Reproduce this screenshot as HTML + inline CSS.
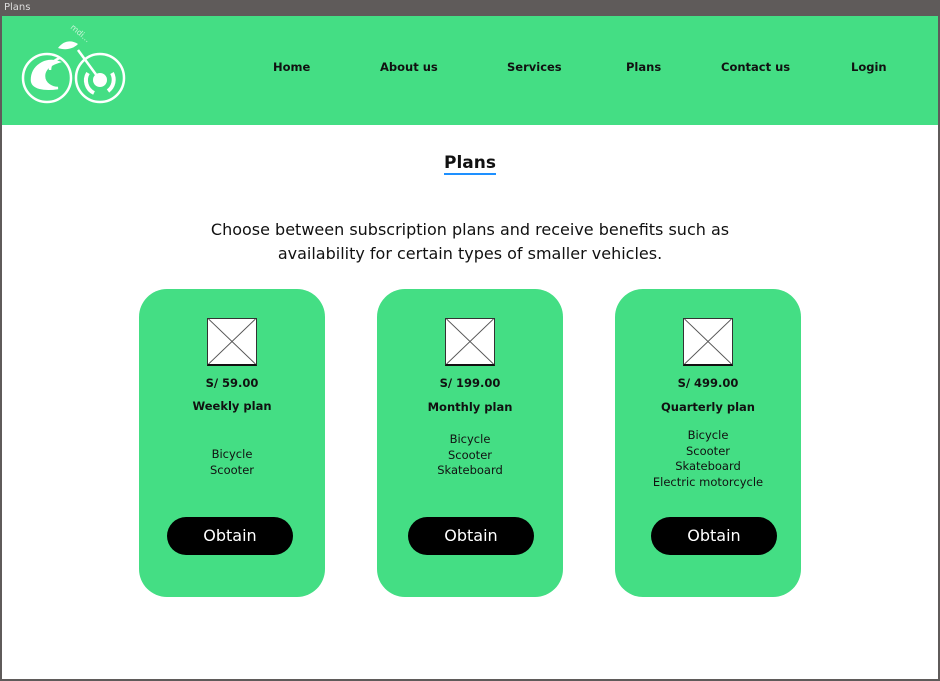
<!DOCTYPE html>
<html><head><meta charset="utf-8"><style>
*{margin:0;padding:0;box-sizing:border-box}
body{width:940px;height:681px;background:#5f5b5a;font-family:"DejaVu Sans","Liberation Sans",sans-serif;position:relative;overflow:hidden}
.tb{position:absolute;left:4px;top:2px;color:#ddd;font-size:10px}
.win{position:absolute;left:2px;top:16px;width:936px;height:663px;background:#fff}
.hdr{position:absolute;left:0;top:0;width:936px;height:109px;background:#44de84}
.nav a{position:absolute;top:44px;font-size:11.5px;font-weight:bold;color:#111;text-decoration:none}
h1{position:absolute;left:0;width:936px;top:137px;text-align:center;font-size:17px;font-weight:bold;color:#111}
h1 span{border-bottom:2px solid #1e90ff;line-height:19px;display:inline-block}
.intro{position:absolute;left:0;width:936px;top:202px;text-align:center;font-size:16px;line-height:24px;color:#111}
.card{position:absolute;top:273px;width:186px;height:308px;background:#44de84;border-radius:28px;text-align:center;color:#111}
.img{position:absolute;left:68px;top:29px;width:50px;height:48px;background:#fff;border:1px solid #333;border-bottom:2px solid #111}
.price{position:absolute;left:0;width:100%;top:87px;font-size:11.5px;font-weight:bold}
.name{position:absolute;left:0;width:100%;top:110px;font-size:11.5px;font-weight:bold}
.list{position:absolute;left:0;width:100%;font-size:11.5px;line-height:15.5px}
.btn{position:absolute;left:28px;top:228px;width:126px;height:38px;background:#000;color:#fff;border-radius:19px;font-size:16px;font-weight:500;line-height:38px}
</style></head><body>
<div class="tb">Plans</div>
<div class="win">
<div class="hdr">
<svg width="110" height="90" style="position:absolute;left:18px;top:2px" viewBox="0 0 110 90" fill="none" stroke="#fff" stroke-width="2.5">
<text x="50" y="10" fill="#c8f5d8" stroke="none" font-size="8" transform="rotate(40 50 10)">mdi...</text>
<circle cx="27" cy="60" r="24"/><circle cx="80" cy="60" r="24"/>
<path d="M12 62c0-14 14-22 26-18c-6 2-14 6-14 14c0 8 8 12 14 12c-14 2-26 0-26-8z" fill="#fff"/>
<path d="M40 40c-6 2-10 6-10 12" />
<path d="M58 32l22 30"/><circle cx="80" cy="62" r="7" fill="#fff" stroke="none"/>
<path d="M68 55a14 14 0 0 0 6 20M92 55a14 14 0 0 1 -4 18" stroke-width="4"/>
<path d="M38 30c6-8 14-8 20-4c-6 6-14 6-20 4z" fill="#fff" stroke="none"/>
</svg>
<div class="nav">
<a style="left:271px">Home</a><a style="left:378px">About us</a><a style="left:505px">Services</a><a style="left:624px">Plans</a><a style="left:719px">Contact us</a><a style="left:849px">Login</a>
</div></div>
<h1><span>Plans</span></h1>
<div class="intro">Choose between subscription plans and receive benefits such as<br>availability for certain types of smaller vehicles.</div>
<div class="card" style="left:137px">
<svg class="img" viewBox="0 0 50 48"><path d="M0 0L50 48M50 0L0 48" stroke="#555" stroke-width="1"/></svg>
<div class="price">S/ 59.00</div><div class="name">Weekly plan</div>
<div class="list" style="top:158px">Bicycle<br>Scooter</div>
<div class="btn">Obtain</div></div>
<div class="card" style="left:375px">
<svg class="img" viewBox="0 0 50 48"><path d="M0 0L50 48M50 0L0 48" stroke="#555" stroke-width="1"/></svg>
<div class="price">S/ 199.00</div><div class="name" style="top:111px">Monthly plan</div>
<div class="list" style="top:143px">Bicycle<br>Scooter<br>Skateboard</div>
<div class="btn" style="left:31px">Obtain</div></div>
<div class="card" style="left:613px">
<svg class="img" viewBox="0 0 50 48"><path d="M0 0L50 48M50 0L0 48" stroke="#555" stroke-width="1"/></svg>
<div class="price">S/ 499.00</div><div class="name" style="top:111px">Quarterly plan</div>
<div class="list" style="top:139px">Bicycle<br>Scooter<br>Skateboard<br>Electric motorcycle</div>
<div class="btn" style="left:36px">Obtain</div></div>
</div>
</body></html>
